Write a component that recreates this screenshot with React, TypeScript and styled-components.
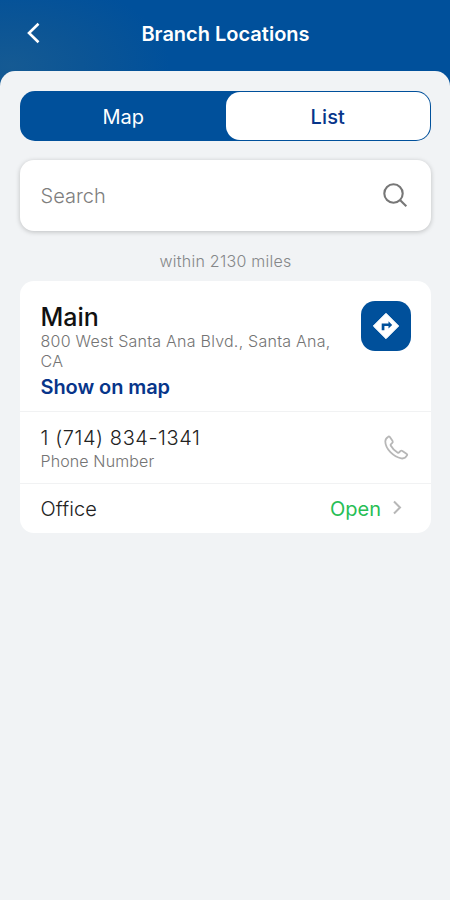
import React from 'react';
import styled, { createGlobalStyle } from 'styled-components';

const BLUE = '#00509b';
const NAVY = '#07358a';

const GlobalStyle = createGlobalStyle`
  * { box-sizing: border-box; }
  body { margin: 0; background: #f1f3f5; font-family: Inter, sans-serif; }
  button { font: inherit; border: 0; padding: 0; margin: 0; background: none; }
`;

const Screen = styled.div`
  width: 450px;
  height: 900px;
  overflow: hidden;
  display: flex;
  flex-direction: column;
  background: radial-gradient(ellipse 160px 90px at 10px 66px, #155a93 0%, #0c5595 45%, ${BLUE} 100%);
`;

const Header = styled.header`
  height: 70.5px;
  flex: none;
  display: grid;
  grid-template-columns: 66px 1fr 65px;
  align-items: center;
  padding-bottom: 3px;
`;

const BackButton = styled.button`
  display: flex;
  justify-content: center;
  align-items: center;
  height: 40px;
  padding-bottom: 2px;
`;

const Title = styled.h1`
  margin: 0;
  text-align: center;
  color: #fff;
  font-size: 20px;
  line-height: 24px;
  font-weight: 600;
  white-space: nowrap;
`;

const Sheet = styled.main`
  flex: 1;
  padding: 20px 19px 0 20px;
  border-radius: 15px 15px 0 0;
  background: #f1f3f5;
`;

const Segmented = styled.div`
  height: 50.5px;
  display: grid;
  grid-template-columns: 1fr 1fr;
  padding: 1px;
  border-radius: 15px;
  background: ${BLUE};
`;

const Segment = styled.button<{ $active?: boolean }>`
  border-radius: 14px;
  font-size: 20px;
  line-height: 24px;
  padding-top: 2px;
  letter-spacing: ${(p) => (p.$active ? '0.1px' : '0')};
  font-weight: ${(p) => (p.$active ? 550 : 400)};
  color: ${(p) => (p.$active ? NAVY : '#fff')};
  background: ${(p) => (p.$active ? '#fff' : 'transparent')};
`;

const SearchBox = styled.div`
  margin-top: 19px;
  height: 71px;
  padding: 0 22px 0 20.5px;
  display: flex;
  align-items: center;
  justify-content: space-between;
  border-radius: 14px;
  background: #fff;
  box-shadow: 0 1px 5px rgba(0, 0, 0, 0.22);

  svg { margin-bottom: 2px; }
`;

const Placeholder = styled.span`
  font-size: 20px;
  line-height: 24px;
  color: #7e7e7e;
  font-weight: 300;
`;

const Radius = styled.p`
  margin: 20px 0 10px;
  text-align: center;
  font-size: 16px;
  line-height: 20px;
  letter-spacing: 0.25px;
  font-weight: 350;
  color: #858789;
`;

const Card = styled.section`
  height: 252px;
  border-radius: 14px;
  background: #fff;
  display: grid;
  grid-template-rows: 130px 72px 50px;
`;

const Row = styled.div<{ $top?: boolean; $right: number }>`
  display: flex;
  justify-content: space-between;
  align-items: ${(p) => (p.$top ? 'flex-start' : 'center')};
  padding: ${(p) => (p.$top ? '20px' : '1px')} ${(p) => p.$right}px 0 20.5px;
  & + & { border-top: 1px solid #f1f2f3; }
`;

const BranchName = styled.h2`
  margin: 0;
  padding-top: 2px;
  font-size: 25px;
  line-height: 28px;
  font-weight: 500;
  color: #111;
`;

const Detail = styled.div`
  font-size: 16px;
  line-height: 20px;
  font-weight: 300;
  letter-spacing: 0.12px;
  color: #747474;
`;

const Address = styled(Detail)`
  width: 306px;
  letter-spacing: 0.24px;
`;

const MapLink = styled.a`
  display: block;
  margin-top: 4px;
  font-size: 20px;
  line-height: 24px;
  font-weight: 600;
  letter-spacing: -0.08px;
  color: ${NAVY};
`;

const Value = styled.div<{ $spacing?: number }>`
  font-size: 20px;
  line-height: 24px;
  letter-spacing: ${(p) => p.$spacing ?? 0.1}px;
  font-weight: 350;
  color: #222;
`;

const PhoneLabel = styled(Detail)`
  margin-top: 1px;
`;

const DirectionsButton = styled.button`
  width: 50px;
  height: 50px;
  flex: none;
  display: flex;
  align-items: center;
  justify-content: center;
  border-radius: 14px;
  background: ${BLUE};
`;

const Status = styled.div`
  display: flex;
  align-items: center;
  gap: 12px;
  font-size: 20px;
  line-height: 24px;
  color: #27be55;

  svg { margin-bottom: 3px; }
`;

export default function App() {
  return (
    <>
      <GlobalStyle />
      <Screen>
        <Header>
          <BackButton aria-label="Back">
            <svg width="14" height="22" viewBox="0 0 14 22" fill="none" stroke="#fff" strokeWidth="2.6">
              <path d="M12.5 1.7 3 11l9.5 9.3" />
            </svg>
          </BackButton>
          <Title>Branch Locations</Title>
        </Header>
        <Sheet>
          <Segmented>
            <Segment>Map</Segment>
            <Segment $active>List</Segment>
          </Segmented>
          <SearchBox>
            <Placeholder>Search</Placeholder>
            <svg width="26" height="26" viewBox="0 0 26 26" fill="none" stroke="#777" strokeWidth="2.1">
              <circle cx="10.5" cy="11.5" r="9.2" />
              <path d="m17 18 6.3 6.3" />
            </svg>
          </SearchBox>
          <Radius>within 2130 miles</Radius>
          <Card>
            <Row $top $right={20}>
              <div>
                <BranchName>Main</BranchName>
                <Address>800 West Santa Ana Blvd., Santa Ana, CA</Address>
                <MapLink>Show on map</MapLink>
              </div>
              <DirectionsButton aria-label="Directions">
                <svg width="28" height="28" viewBox="0 0 28 28">
                  <path d="M14 1.3 26.7 14 14 26.7 1.3 14Z" fill="#fff" stroke="#fff" strokeWidth="1" strokeLinejoin="round" />
                  <path d="M9.7 18.2v-6.8h6.8V9.2l3.7 3.7-3.7 3.7v-2.5h-4.1v4.1Z" fill={BLUE} />
                </svg>
              </DirectionsButton>
            </Row>
            <Row $right={22}>
              <div>
                <Value $spacing={0.58}>1 (714) 834-1341</Value>
                <PhoneLabel>Phone Number</PhoneLabel>
              </div>
              <svg width="26" height="26" viewBox="0 0 26 26" fill="none" stroke="#b7b7b7" strokeWidth="1.8" strokeLinejoin="round">
                <path d="M6.7 1.8 9.6 6.1Q10.2 7.1 9.3 7.9L7.8 9.3Q7.3 9.8 7.7 10.5Q10 14.8 14.8 17.7Q15.5 18.1 16 17.5L17.6 15.9Q18.4 15.2 19.4 15.9L23.8 18.9Q24.6 19.5 24 20.4Q22 24 18.3 23.4Q12.4 22.2 7.4 17.2Q2.4 12 2.3 6.6Q2.3 3.6 5 1.9Q6 1 6.7 1.8Z" />
              </svg>
            </Row>
            <Row $right={29}>
              <Value>Office</Value>
              <Status>
                Open
                <svg width="9" height="15" viewBox="0 0 9 15" fill="none" stroke="#b7b7b7" strokeWidth="2">
                  <path d="m1 1.5 6 6-6 6" />
                </svg>
              </Status>
            </Row>
          </Card>
        </Sheet>
      </Screen>
    </>
  );
}
